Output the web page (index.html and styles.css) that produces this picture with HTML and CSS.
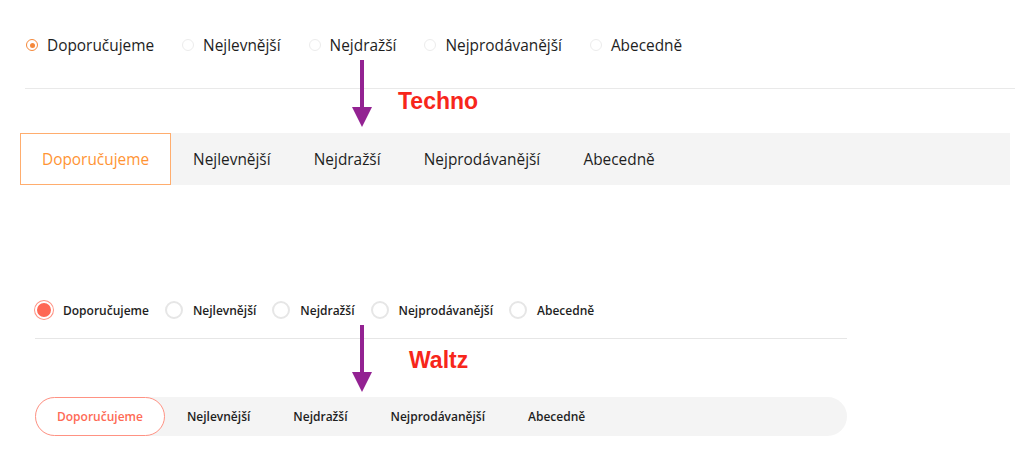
FILE: index.html
```html
<!DOCTYPE html>
<html lang="cs">
<head>
<meta charset="utf-8">
<title>Řazení</title>
<link rel="stylesheet" href="styles.css">
</head>
<body>
<div class="page">
  <section class="techno">
    <div class="t-radios">
      <label class="t-radio active"><span class="t-dot"></span>Doporučujeme</label>
      <label class="t-radio"><span class="t-dot"></span>Nejlevnější</label>
      <label class="t-radio"><span class="t-dot"></span>Nejdražší</label>
      <label class="t-radio"><span class="t-dot"></span>Nejprodávanější</label>
      <label class="t-radio"><span class="t-dot"></span>Abecedně</label>
    </div>
    <div class="t-line"></div>
    <div class="t-tabs">
      <span class="t-tab active">Doporučujeme</span>
      <span class="t-tab">Nejlevnější</span>
      <span class="t-tab">Nejdražší</span>
      <span class="t-tab">Nejprodávanější</span>
      <span class="t-tab">Abecedně</span>
    </div>
  </section>

  <section class="waltz">
    <div class="w-radios">
      <label class="w-radio active"><span class="w-dot"></span>Doporučujeme</label>
      <label class="w-radio"><span class="w-dot"></span>Nejlevnější</label>
      <label class="w-radio"><span class="w-dot"></span>Nejdražší</label>
      <label class="w-radio"><span class="w-dot"></span>Nejprodávanější</label>
      <label class="w-radio"><span class="w-dot"></span>Abecedně</label>
    </div>
    <div class="w-line"></div>
    <div class="w-tabs">
      <span class="w-tab active">Doporučujeme</span>
      <span class="w-tab">Nejlevnější</span>
      <span class="w-tab">Nejdražší</span>
      <span class="w-tab">Nejprodávanější</span>
      <span class="w-tab">Abecedně</span>
    </div>
  </section>

  <svg class="arrow arrow-1" width="24" height="68" viewBox="0 0 24 68">
    <rect x="10" y="0" width="4" height="50" fill="#932292"/>
    <polygon points="2,47 22,47 12,67" fill="#932292"/>
  </svg>
  <div class="note note-1">Techno</div>

  <svg class="arrow arrow-2" width="24" height="68" viewBox="0 0 24 68">
    <rect x="10" y="0" width="4" height="50" fill="#932292"/>
    <polygon points="2,47 22,47 12,67" fill="#932292"/>
  </svg>
  <div class="note note-2">Waltz</div>
</div>
</body>
</html>
```

FILE: styles.css
```css
* { box-sizing: border-box; }
html, body { margin: 0; padding: 0; background: #fff; }
body { font-family: "Open Sans", "Noto Sans", sans-serif; color: #222; }

.page { position: relative; width: 1024px; height: 474px; overflow: hidden; }

/* Techno */
.techno { padding-top: 33px; }
.t-radios { display: flex; align-items: center; height: 24px; margin-left: 26px; gap: 28px; }
.t-radio { display: flex; align-items: center; gap: 9px; font-size: 15.4px; color: #1e1e1e; }
.t-dot { width: 12px; height: 12px; border-radius: 50%; border: 1px solid #ececec; display: flex; align-items: center; justify-content: center; flex: none; }
.t-radio.active .t-dot { border-color: #f5883a; }
.t-radio.active .t-dot::after { content: ""; width: 5px; height: 5px; border-radius: 50%; background: #f5883a; }

.t-line { height: 1px; background: #e9e9e9; margin: 31px 9px 0 25px; }

.t-tabs { display: flex; align-items: stretch; height: 52px; margin: 44px 14px 0 20px; background: #f4f4f4; }
.t-tab { display: flex; align-items: center; padding: 0 21px; font-size: 15.4px; color: #1e1e1e; border: 1px solid transparent; }
.t-tab + .t-tab { padding: 0 20.6px; }
.t-tab.active + .t-tab { padding-left: 21px; }
.t-tab.active { background: #fff; border-color: #ffad6e; color: #ff9434; }

/* Waltz */
.waltz { padding-top: 115px; }
.w-radios { display: flex; align-items: center; height: 20px; margin-left: 35px; gap: 16px; }
.w-radio { display: flex; align-items: center; gap: 10px; font-size: 12px; font-weight: 600; color: #1e1e1e; }
.w-dot { width: 18px; height: 18px; border-radius: 50%; border: 2px solid #e6e6e6; flex: none; }
.w-radio.active .w-dot { background: #fe6855; border: 2px solid #fff; box-shadow: 0 0 0 1px #ff9283; }

.w-line { height: 1px; background: #e6e6e6; margin: 18px 0 0 35px; width: 812px; }

.w-tabs { display: flex; align-items: stretch; height: 39px; margin: 58px 0 0 35px; width: 812px; background: #f4f4f4; border-radius: 20px; }
.w-tab { display: flex; align-items: center; padding: 0 21px; font-size: 12px; font-weight: 600; color: #1e1e1e; border: 1px solid transparent; border-radius: 20px; }
.w-tab + .w-tab { padding: 0 20.5px; }
.w-tab.active + .w-tab { padding-left: 21px; }
.w-tab.active { background: #fff; border-color: #ff9283; color: #fe6a55; }

/* annotations */
.arrow { position: absolute; }
.arrow-1 { left: 350px; top: 60px; }
.arrow-2 { left: 350px; top: 325px; }
.note { position: absolute; font-family: "Liberation Sans", Arial, sans-serif; font-weight: 700; font-size: 23px; line-height: 1; color: #f7261b; }
.note-1 { left: 398px; top: 90px; }
.note-2 { left: 409px; top: 349px; }
```
